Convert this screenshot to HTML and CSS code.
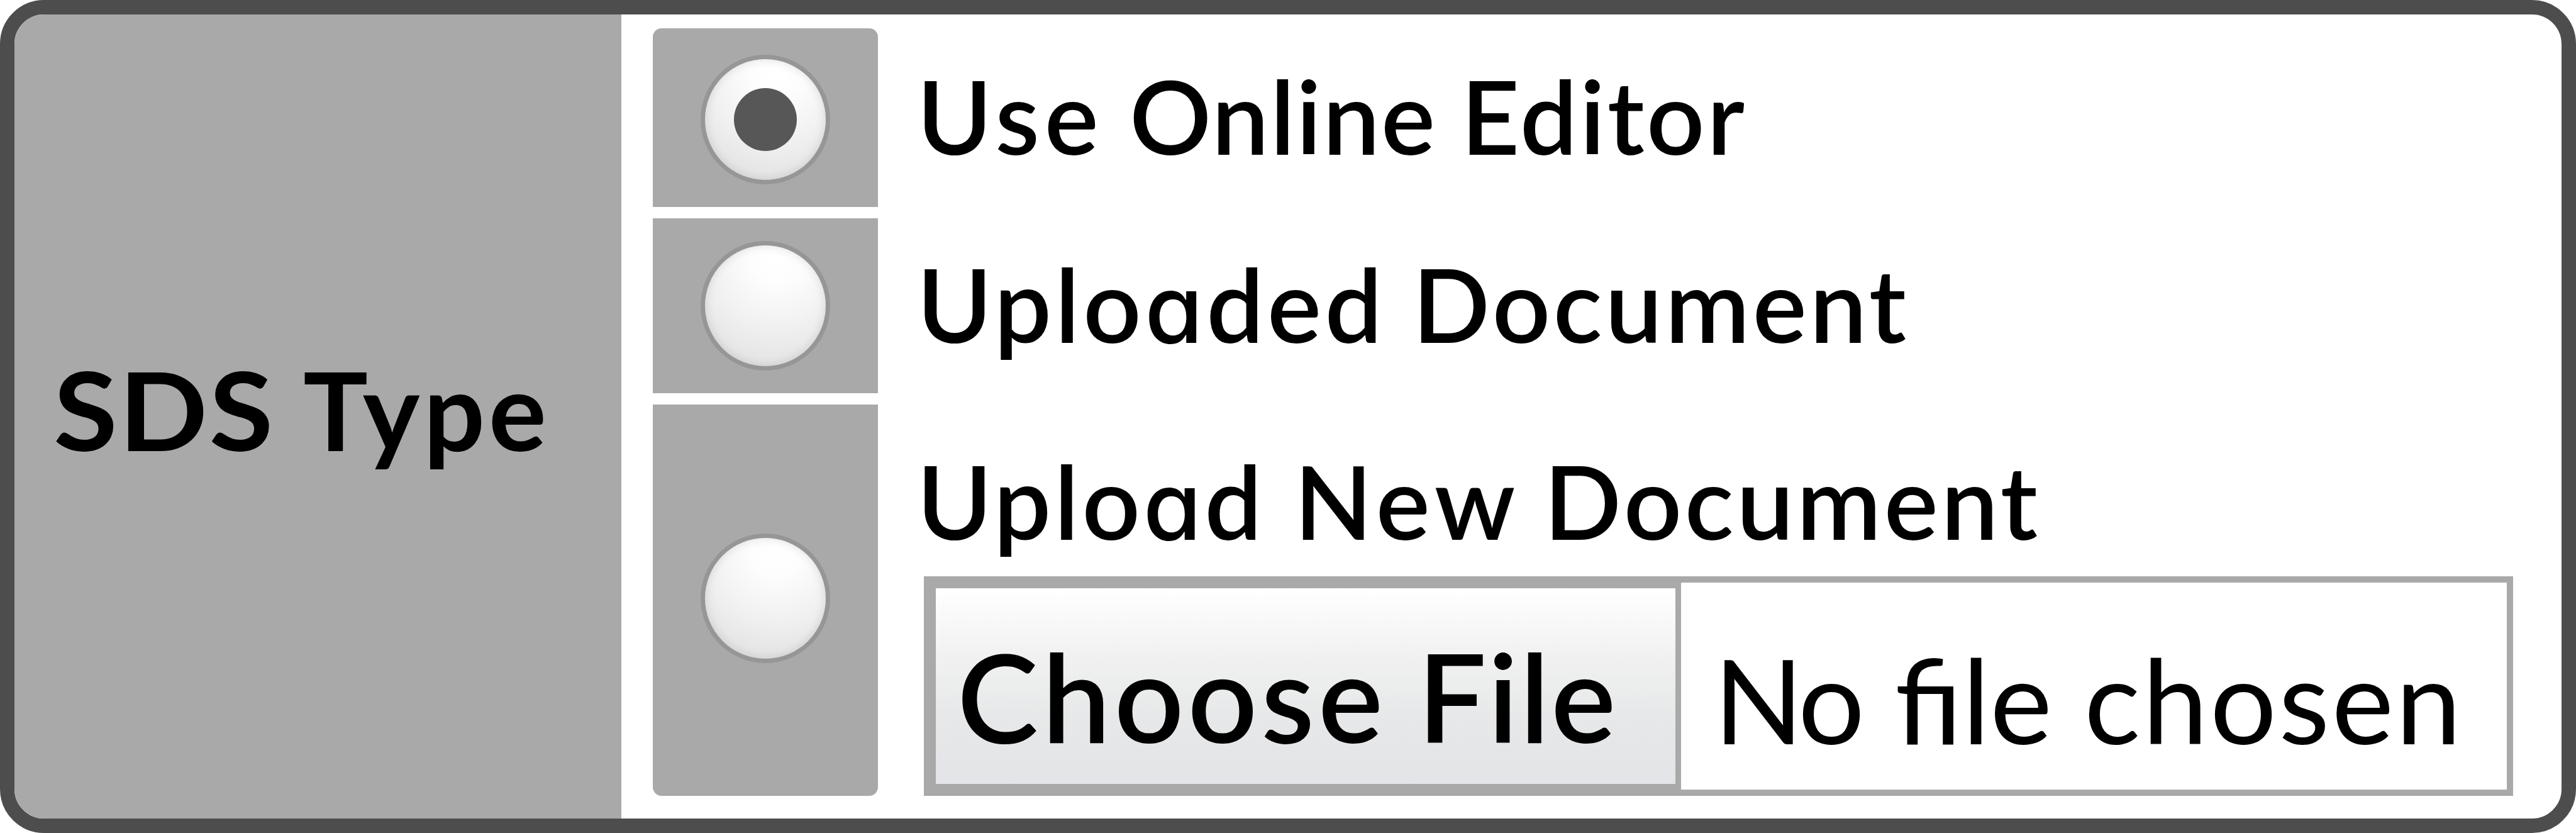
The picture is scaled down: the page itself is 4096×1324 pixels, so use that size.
FILE: index.html
```
<!DOCTYPE html>
<html lang="en">
<head>
  <meta charset="utf-8">
  <title>SDS Type</title>
  <link rel="stylesheet" href="styles.css">
</head>
<body>
<div class="panel">
  <div class="heading"><span class="word sds">SDS</span><span class="word type">Type</span></div>

  <div class="options">
    <div class="cell first"><span class="radio checked"></span></div>
    <label class="label"><span class="word use">Use</span><span class="word online">Online</span><span class="word editor">Editor</span></label>

    <div class="cell"><span class="radio"></span></div>
    <label class="label"><span class="word uploaded">Uplo<span class="a">a</span>ded</span><span class="word document">Document</span></label>

    <div class="cell last"><span class="radio"></span></div>
    <div class="upload">
      <label class="label"><span class="word upl">Uplo<span class="a">a</span>d</span><span class="word new">New</span><span class="word document">Document</span></label>
      <div class="file">
        <div class="choose"><span class="word choose-word">Choose</span><span class="word file-word">File</span></div>
        <div class="chosen"><span class="word no">No</span><span class="word file-small">file</span><span class="word chosen-word">chosen</span></div>
      </div>
    </div>
  </div>
</div>
</body>
</html>
```
FILE: styles.css
```
* {
  box-sizing: border-box;
}

body {
  margin: 0;
  background: white;
  color: black;
  font-family: "Lato", "Open Sans", sans-serif;
}

.panel {
  display: flex;
  width: 4096px;
  height: 1324px;
  border: 23px solid #4d4d4d;
  border-radius: 70px;
  overflow: hidden;
}

.word {
  display: inline-block;
  white-space: nowrap;
}

.heading {
  display: flex;
  align-items: center;
  width: 965px;
  padding: 0 0 24px 62px;
  background: #a9a9a9;
  font-size: 172px;
  font-weight: 700;
}

.sds {
  width: 397px;
  letter-spacing: 2px;
  transform: scaleX(1.08);
  transform-origin: left;
}

.type { letter-spacing: 6px; }

/* radio cells on the left, their labels on the right */
.options {
  display: grid;
  grid-template-columns: 358px 1fr;
  grid-template-rows: 284.4px 278.4px 621.4px;
  row-gap: 17.7px;
  column-gap: 73px;
  padding: 22px 0 0 50px;
  flex: 1;
}

.cell {
  display: flex;
  align-items: center;
  justify-content: center;
  background: #a9a9a9;
}

.first {
  border-radius: 14px 14px 0 0;
  padding-top: 6px;
}

.last {
  border-radius: 0 0 14px 14px;
  padding-bottom: 5px;
}

.radio {
  display: flex;
  align-items: center;
  justify-content: center;
  width: 206px;
  height: 206px;
  border: 7px solid #969696;
  border-radius: 50%;
  background: radial-gradient(circle at 60% 10%, #ffffff 0%, #fdfdfd 20%, #f0f0f0 55%, #dedede 95%);
  box-shadow: inset 0 0 16px rgba(0, 0, 0, 0.12);
}

.checked::before {
  content: "";
  width: 100px;
  height: 100px;
  border-radius: 50%;
  background: #575757;
}

.label {
  display: flex;
  align-items: center;
  margin-left: -11px;
  padding-bottom: 8px;
  font-size: 162px;
  font-weight: 600;
}

/* single-storey a */
.a {
  font-family: "Inter", sans-serif;
  font-feature-settings: "cv11";
  font-size: 150px;
  font-weight: 500;
  line-height: 0;
}

.use { width: 338px; letter-spacing: 8px; }
.online { width: 527px; letter-spacing: 2px; }
.editor { letter-spacing: 3.7px; }
.uploaded { width: 788px; letter-spacing: 5.4px; }
.document { letter-spacing: 4.6px; }
.upl { width: 600px; letter-spacing: 4.8px; }
.new { width: 397px; letter-spacing: 8px; }

.upload .label {
  height: 272.4px;
  padding: 33px 0 0;
}

.file {
  display: flex;
  width: 2527px;
  height: 349px;
  border: 10px solid #a9a9a9;
}

.choose {
  display: flex;
  align-items: center;
  width: 1194px;
  border: 9px solid #a9a9a9;
  padding: 31px 0 0 34px;
  background: linear-gradient(#ffffff, #f0f1f0 35%, #e7e8e9 65%, #e3e4e7);
  font-size: 194px;
  font-weight: 600;
}

.choose-word { width: 732px; letter-spacing: 6px; }
.file-word { letter-spacing: 2.6px; }

.chosen {
  display: flex;
  align-items: center;
  padding: 41px 0 0 52px;
  font-size: 187px;
  font-weight: 400;
}

.no { width: 288px; letter-spacing: -6px; }
.file-small { width: 301px; }
.chosen-word { letter-spacing: 3.2px; }
```
